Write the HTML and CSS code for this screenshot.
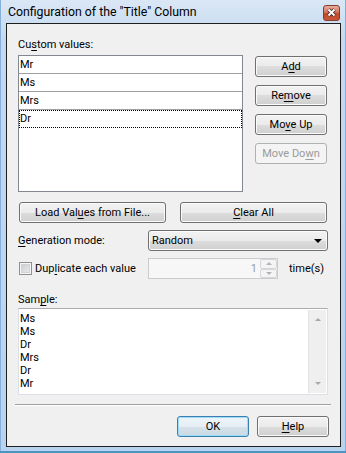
FILE: index.html
```html
<!DOCTYPE html>
<html lang="en">

<head>
    <meta charset="UTF-8">
    <title>Configuration of the "Title" Column</title>
    <link rel="stylesheet" href="styles.css">
</head>

<body>

    <div class="window">
        <div class="titlebar">
            <span class="title">Configuration of the "Title" Column</span>
            <svg class="close" width="17" height="16" viewBox="0 0 17 16">
                <defs>
                    <linearGradient id="closeFill" x1="0" y1="0" x2="0" y2="1">
                        <stop offset="0" stop-color="#e8b3a4" />
                        <stop offset="0.45" stop-color="#d4745c" />
                        <stop offset="0.55" stop-color="#c0482a" />
                        <stop offset="1" stop-color="#c65a3c" />
                    </linearGradient>
                </defs>
                <rect x="0.5" y="0.5" width="16" height="15" rx="2.5" fill="url(#closeFill)" stroke="#8a3b2a" />
                <path d="M5.5 4.5 L11.5 10.5 M11.5 4.5 L5.5 10.5" stroke="#4a1e16" stroke-width="3.6" />
                <path d="M5.5 4.5 L11.5 10.5 M11.5 4.5 L5.5 10.5" stroke="#ffffff" stroke-width="2" />
            </svg>
        </div>

        <div class="client">
            <div class="values">
                <div class="values-left">
                    <div class="label">Cu<u>s</u>tom values:</div>
                    <div class="listbox">
                        <div class="item">Mr</div>
                        <div class="item">Ms</div>
                        <div class="item">Mrs</div>
                        <div class="item focus">Dr</div>
                    </div>
                </div>
                <div class="side-buttons">
                    <button class="btn">A<u>d</u>d</button>
                    <button class="btn">Re<u>m</u>ove</button>
                    <button class="btn">Mo<u>v</u>e Up</button>
                    <button class="btn" disabled>Move Do<u>w</u>n</button>
                </div>
            </div>

            <div class="file-row">
                <button class="btn">Load Val<u>u</u>es from File...</button>
                <button class="btn"><u>C</u>lear All</button>
            </div>

            <div class="options">
                <div class="label"><u>G</u>eneration mode:</div>
                <div class="combo">
                    <span>Random</span>
                    <span class="combo-arrow"></span>
                </div>

                <div class="check">
                    <span class="check-box"></span>
                    <span>Dup<u>l</u>icate each value</span>
                </div>
                <div class="spin-line">
                    <div class="spin">
                        <span class="spin-value">1</span>
                        <div class="spin-buttons">
                            <span class="spin-btn"><span class="tri up"></span></span>
                            <span class="spin-btn"><span class="tri down"></span></span>
                        </div>
                    </div>
                    <span class="unit">time(s)</span>
                </div>
            </div>

            <div class="label sample-label">Sam<u>p</u>le:</div>
            <div class="sample">
                <div class="sample-lines">
                    <div>Ms</div>
                    <div>Ms</div>
                    <div>Dr</div>
                    <div>Mrs</div>
                    <div>Dr</div>
                    <div>Mr</div>
                </div>
                <div class="scrollbar">
                    <span class="tri up"></span>
                    <span class="tri down"></span>
                </div>
            </div>

            <div class="separator"></div>

            <div class="dialog-buttons">
                <button class="btn default">OK</button>
                <button class="btn"><u>H</u>elp</button>
            </div>
        </div>
    </div>

</body>

</html>
```

FILE: styles.css
```css
body {
    margin: 0;
    font-family: Roboto, "Segoe UI", sans-serif;
    font-size: 11px;
    color: #000;
}

u {
    text-underline-offset: 2px;
}

.window {
    width: 346px;
    height: 453px;
    box-sizing: border-box;
    padding: 0 5px 6px 6px;
    background: linear-gradient(to bottom, #dae7f5, #c3d9f1 40px, #b8d3f0);
    box-shadow: inset 0 -2px 0 #4d93bf, inset 1px 0 0 #86b0da, inset -1px 0 0 #86b0da;
}

.titlebar {
    height: 23px;
    display: flex;
    align-items: flex-start;
    justify-content: space-between;
    margin-left: -6px;
    padding-left: 8px;
    box-sizing: border-box;
}

.title {
    font-size: 12.3px;
    padding-top: 2px;
    line-height: 21px;
}

.close {
    margin-top: 5px;
    margin-right: 1px;
}

.client {
    height: 424px;
    box-sizing: border-box;
    border: 1px solid #1e1e1e;
    background: #f0f0f0;
    padding: 13px 12px 0 11px;
}

.label {
    line-height: 15px;
}

/* custom values list + side buttons */

.values {
    display: flex;
    gap: 12px;
}

.values-left {
    width: 225px;
}

.listbox {
    margin-top: 3px;
    height: 137px;
    box-sizing: border-box;
    border: 1px solid #828790;
    background: #fff;
}

.item {
    height: 17px;
    line-height: 18px;
    padding-left: 1px;
    border-bottom: 1px solid #a0a0a0;
}

.item.focus {
    outline: 1px dotted #000;
    outline-offset: -1px;
    border-bottom-color: transparent;
}

.side-buttons {
    display: flex;
    flex-direction: column;
    gap: 8px;
    margin-top: 19px;
    width: 72px;
}

.btn {
    height: 21px;
    padding: 0;
    font: inherit;
    color: #000;
    border: 1px solid #707070;
    border-radius: 3px;
    background: linear-gradient(to bottom, #f2f2f2 0%, #ebebeb 50%, #dddddd 50%, #cfcfcf 100%);
    box-shadow: inset 0 0 0 1px #fafafa;
    line-height: 17px;
}

.btn:disabled {
    color: #9a9a9a;
    border-color: #adb2b5;
    background: #f4f4f4;
    box-shadow: none;
}

.btn.default {
    border-color: #3c7fb1;
    background: linear-gradient(to bottom, #eef5f9 0%, #e5eef4 50%, #d5e2ea 50%, #cbd9e2 100%);
    box-shadow: inset 0 0 0 1px #9adcf9;
}

.file-row {
    display: grid;
    grid-template-columns: 147px 147px;
    justify-content: space-between;
    margin: 10px 1px 0 1px;
}

/* generation mode & duplicate */

.options {
    display: grid;
    grid-template-columns: 130px 180px;
    grid-auto-rows: 21px;
    row-gap: 7px;
    align-items: center;
    margin-top: 7px;
}

.combo {
    height: 21px;
    box-sizing: border-box;
    border: 1px solid #707070;
    border-radius: 3px;
    background: linear-gradient(to bottom, #f2f2f2 0%, #ebebeb 50%, #dddddd 50%, #cfcfcf 100%);
    box-shadow: inset 0 0 0 1px #fafafa;
    display: flex;
    align-items: center;
    justify-content: space-between;
    padding: 0 5px 0 3px;
}

.combo-arrow {
    width: 0;
    height: 0;
    border-left: 4px solid transparent;
    border-right: 4px solid transparent;
    border-top: 4px solid #000;
}

.check {
    display: flex;
    align-items: center;
    gap: 3px;
    margin-left: 1px;
}

.check-box {
    width: 13px;
    height: 13px;
    box-sizing: border-box;
    border: 1px solid #8e8f8f;
    background: linear-gradient(135deg, #c4c7cb, #f0f0f0);
    box-shadow: inset 0 0 0 1px #f6f6f6, inset 0 0 0 2px #d0d3d6;
}

.spin-line {
    display: flex;
    align-items: center;
}

.spin {
    width: 130px;
    height: 21px;
    box-sizing: border-box;
    border: 1px solid #c9cbcf;
    background: #f7f7f7;
    display: flex;
    justify-content: flex-end;
    align-items: center;
}

.spin-value {
    color: #9a9a9a;
    margin-right: 3px;
}

.spin-buttons {
    width: 17px;
    height: 19px;
    display: flex;
    flex-direction: column;
}

.spin-btn {
    flex: 1;
    border: 1px solid #d4d6d9;
    border-radius: 2px;
    background: #f4f4f4;
    display: flex;
    align-items: center;
    justify-content: center;
}

.tri {
    width: 0;
    height: 0;
    border-left: 3px solid transparent;
    border-right: 3px solid transparent;
}

.tri.up {
    border-bottom: 3px solid #b4b4b4;
}

.tri.down {
    border-top: 3px solid #b4b4b4;
}

.unit {
    margin-left: 11px;
}

/* sample */

.sample-label {
    margin-top: 13px;
}

.sample {
    margin-top: 1px;
    height: 87px;
    box-sizing: border-box;
    border: 1px solid #dbdfe6;
    border-top-color: #abadb3;
    background: #fff;
    display: flex;
    justify-content: space-between;
}

.sample-lines {
    padding: 3px 0 0 1px;
    line-height: 13px;
}

.scrollbar {
    width: 17px;
    margin: 1px 1px 1px 0;
    background: #efefef;
    border-left: 1px solid #e2e2e2;
    display: flex;
    flex-direction: column;
    justify-content: space-between;
    align-items: center;
    padding: 8px 0 8px;
}

.scrollbar .tri.up {
    border-bottom-color: #a8a8a8;
}

.scrollbar .tri.down {
    border-top-color: #a8a8a8;
}

.separator {
    margin: 9px -3px 0 -3px;
    border-top: 1px solid #a0a0a0;
    border-bottom: 1px solid #fff;
}

.dialog-buttons {
    display: flex;
    justify-content: flex-end;
    gap: 8px;
    margin: 10px -1px 0 0;
}

.dialog-buttons .btn {
    width: 72px;
}
```
